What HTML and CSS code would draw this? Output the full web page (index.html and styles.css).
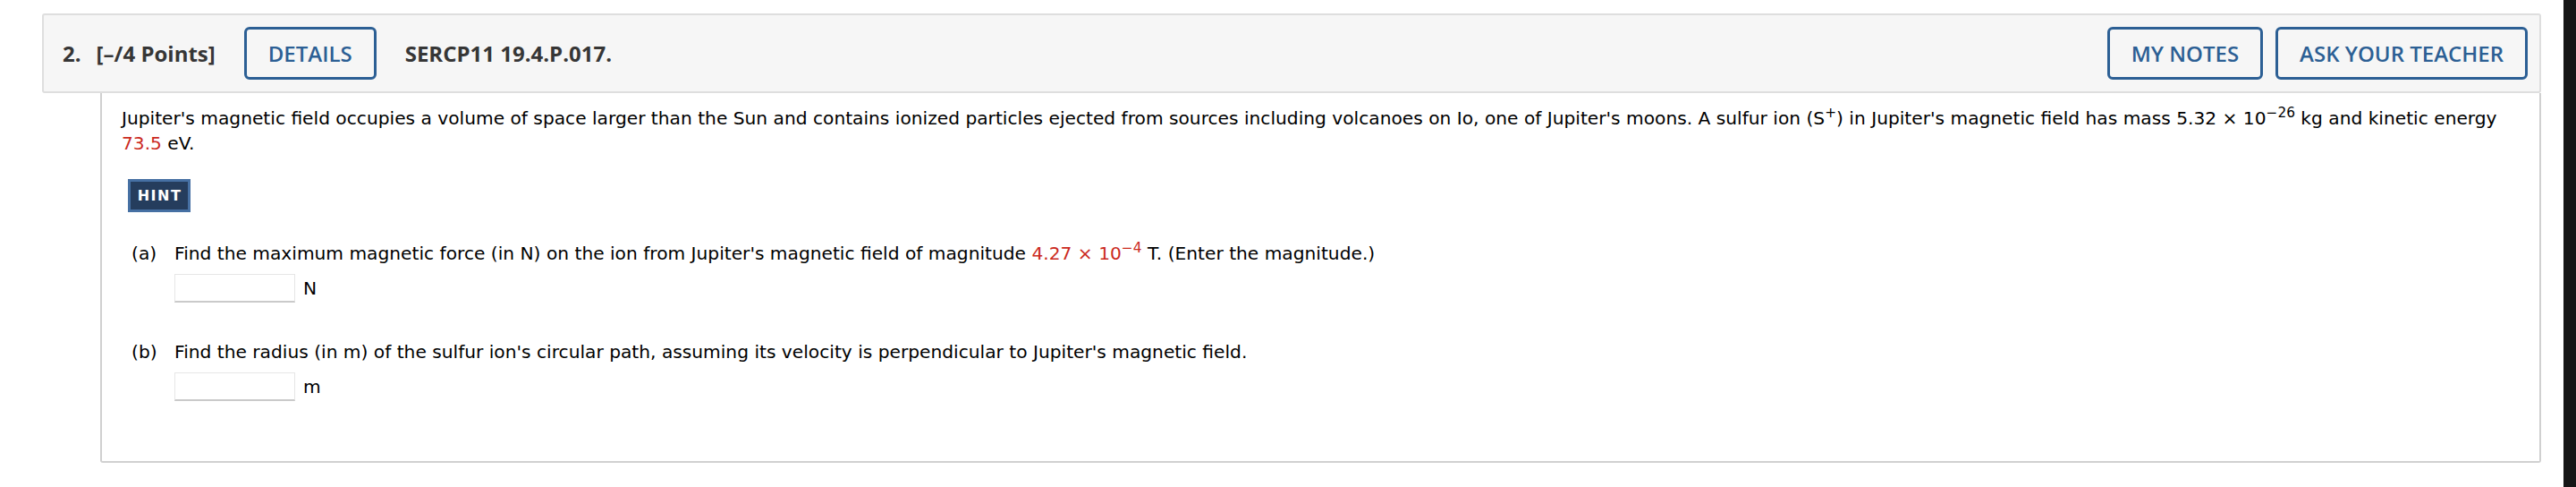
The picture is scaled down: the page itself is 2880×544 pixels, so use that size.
FILE: index.html
```html
<!DOCTYPE html>
<html lang="en">
<head>
<meta charset="utf-8">
<title>Question 2</title>
<link rel="stylesheet" href="styles.css">
</head>
<body>
<main class="page">
  <header class="qhead">
    <span class="qnum">2.</span>
    <span class="qpoints">[–/4 Points]</span>
    <button class="hbtn details">DETAILS</button>
    <span class="qcode">SERCP11 19.4.P.017.</span>
    <span class="spacer"></span>
    <button class="hbtn">MY NOTES</button>
    <button class="hbtn">ASK YOUR TEACHER</button>
  </header>
  <section class="qbody">
    <p class="intro">Jupiter's magnetic field occupies a volume of space larger than the Sun and contains ionized particles ejected from sources including volcanoes on Io, one of Jupiter's moons. A sulfur ion (S<sup>+</sup>) in Jupiter's magnetic field has mass 5.32 × 10<sup>−26</sup> kg and kinetic energy <span class="red">73.5</span> eV.</p>
    <button class="hint">HINT</button>
    <div class="part part-a">
      <span class="plabel">(a)</span>
      <div class="pcontent">
        <div class="ptext">Find the maximum magnetic force (in N) on the ion from Jupiter's magnetic field of magnitude <span class="red">4.27 × 10<sup>−4</sup></span> T. (Enter the magnitude.)</div>
        <div class="answer"><span class="inbox"></span><span class="unit">N</span></div>
      </div>
    </div>
    <div class="part part-b">
      <span class="plabel">(b)</span>
      <div class="pcontent">
        <div class="ptext">Find the radius (in m) of the sulfur ion's circular path, assuming its velocity is perpendicular to Jupiter's magnetic field.</div>
        <div class="answer"><span class="inbox"></span><span class="unit">m</span></div>
      </div>
    </div>
  </section>
</main>
<div class="edge"></div>
</body>
</html>
```
FILE: styles.css
```css
html, body {
  margin: 0;
  padding: 0;
  background: #ffffff;
}
body {
  display: flex;
  width: 2880px;
  height: 544px;
  overflow: hidden;
}
.page {
  flex: 1;
  padding: 15px 25px 0 47px;
}
.edge {
  width: 14px;
  background: #161616;
}
.qhead {
  display: flex;
  align-items: center;
  height: 85px;
  padding: 0 13px 0 21px;
  background: #f6f6f6;
  border: 2px solid #dedede;
  border-radius: 3px;
  font-family: "Open Sans", "Liberation Sans", sans-serif;
  font-size: 24px;
  font-weight: 700;
  color: #363636;
}
.qnum {
  margin-right: 17px;
}
.qpoints {
  margin-right: 32px;
}
.qcode {
  margin-left: 32px;
}
.spacer {
  flex: 1;
}
.hbtn {
  height: 59px;
  padding: 0 24px;
  margin: 0;
  background: transparent;
  border: 3px solid #2c5f94;
  border-radius: 6px;
  font-family: "Open Sans", "Liberation Sans", sans-serif;
  font-size: 24px;
  font-weight: 600;
  color: #2c5f94;
  line-height: 1;
}
.hbtn + .hbtn {
  margin-left: 14px;
}
.qbody {
  margin-left: 65px;
  height: 413px;
  padding: 14px 22px 0 22px;
  border-left: 2px solid #d0d0d0;
  border-right: 2px solid #d0d0d0;
  border-bottom: 2px solid #d0d0d0;
  border-radius: 0 0 3px 3px;
  box-sizing: border-box;
  font-family: "DejaVu Sans", Verdana, sans-serif;
  font-size: 20.2px;
  line-height: 28px;
  color: #000;
}
.intro {
  margin: 0;
}
sup {
  font-size: 0.76em;
  line-height: 0;
  vertical-align: 0.5em;
}
.red {
  color: #cb2a1e;
}
.hint {
  display: block;
  margin: 26px 0 0 7px;
  width: 70px;
  height: 37px;
  padding: 0;
  background: #253d5d;
  border: 3px solid #4670a3;
  color: #fff;
  font-family: "DejaVu Sans", Verdana, sans-serif;
  font-size: 16px;
  font-weight: 700;
  letter-spacing: 1.5px;
  text-indent: 1px;
}
.part {
  display: flex;
  margin-left: 11px;
}
.part-a {
  margin-top: 32px;
}
.part-b {
  margin-top: 41px;
}
.plabel {
  width: 48px;
  flex: none;
}
.pcontent {
  flex: 1;
}
.answer {
  display: flex;
  align-items: center;
  margin-top: 9px;
}
.inbox {
  width: 133px;
  height: 29px;
  background: #fff;
  border: 1px solid #e6e6e6;
  border-bottom: 2px solid #cacaca;
}
.unit {
  margin-left: 9px;
}
```
